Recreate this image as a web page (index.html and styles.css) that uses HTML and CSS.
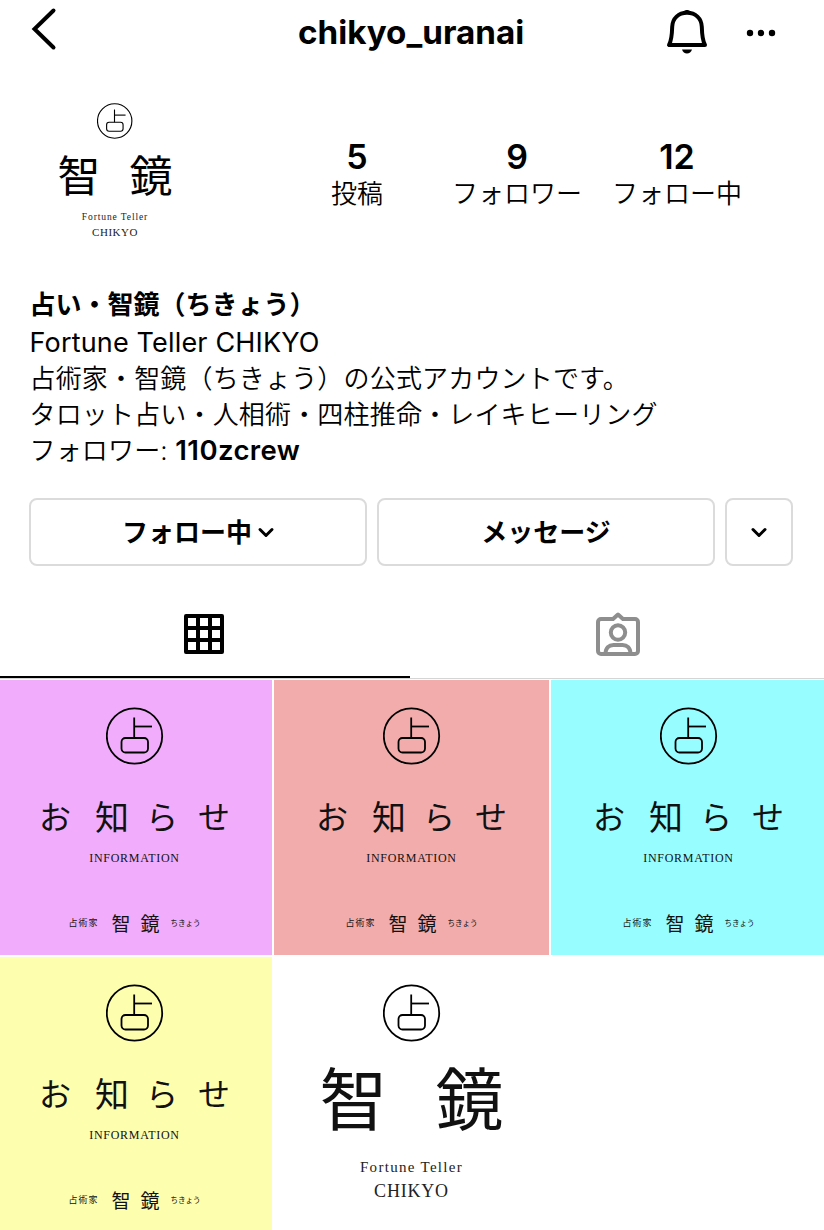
FILE: index.html
```html
<!doctype html>
<html lang="ja">
	<head>
		<meta charset="utf-8">
		<title>chikyo_uranai</title>
		<link rel="stylesheet" href="styles.css">
	</head>
<body>
	<!--共通ロゴ-->
	<svg class="defs" width="0" height="0">
		<symbol id="emblem" viewBox="0 0 58 58">
			<circle cx="28.500" cy="29" r="27.700"/>
			<line x1="28.200" y1="10.500" x2="28.200" y2="31"/>
			<line x1="28.200" y1="19.500" x2="46" y2="19.500"/>
			<rect x="15.500" y="31" width="26.500" height="14.500" rx="4"/>
		</symbol>
	</svg>

	<div class="wrap">
		<div class="header">
			<svg class="back" width="28" height="44" viewBox="0 0 28 44"><path d="M23.500 3.500L4.500 22l19 18.500"/></svg>
			<h1>chikyo_uranai</h1>
			<svg class="bell" width="42" height="46" viewBox="0 0 42 46">
				<path class="line" d="M21 4.800c-8.500 0-14.500 5.500-14.800 14-.2 8-.5 13.500-3.200 18.200h36c-2.700-4.700-3-10.200-3.200-18.200-.3-8.500-6.300-14-14.800-14z"/>
				<path d="M14.500 6C17 4.500 18 2 21 2s4 2.500 6.500 4zM16 41.500h10c-.8 2.600-2.700 4-5 4s-4.200-1.400-5-4z"/>
			</svg>
			<svg class="more" width="30" height="8" viewBox="0 0 30 8"><circle cx="4" cy="4" r="3.200"/><circle cx="15" cy="4" r="3.200"/><circle cx="26" cy="4" r="3.200"/></svg>
		</div>

		<div class="profile">
			<div class="avatar">
				<svg class="emblem"><use href="#emblem"/></svg>
				<div class="name"><span>智</span><span>鏡</span></div>
				<p class="en">Fortune Teller</p>
				<p class="en2">CHIKYO</p>
			</div>
			<ul class="stats">
				<li><b>5</b><span>投稿</span></li>
				<li><b>9</b><span>フォロワー</span></li>
				<li><b>12</b><span>フォロー中</span></li>
			</ul>
		</div>

		<div class="bio">
			<p class="title">占い・智鏡（ちきょう）</p>
			<p class="latin">Fortune Teller CHIKYO</p>
			<p>占術家・智鏡（ちきょう）の公式アカウントです。</p>
			<p>タロット占い・人相術・四柱推命・レイキヒーリング</p>
			<p>フォロワー: <b>110zcrew</b></p>
		</div>

		<div class="btns">
			<a class="btn">フォロー中<svg class="arrow" width="18" height="12" viewBox="0 0 18 12"><path d="M3 2.500l6 6 6-6"/></svg></a>
			<a class="btn">メッセージ</a>
			<a class="btn small"><svg class="arrow" width="18" height="12" viewBox="0 0 18 12"><path d="M3 2.500l6 6 6-6"/></svg></a>
		</div>

		<div class="tabs">
			<a class="tab active">
				<svg width="40" height="40" viewBox="0 0 40 40"><path d="M2 2h36v36H2zM14 2v36M26 2v36M2 14h36M2 26h36"/></svg>
			</a>
			<a class="tab">
				<svg width="44" height="46" viewBox="0 0 44 46"><path d="M5 7h12L22 2.500 27 7h12a3 3 0 0 1 3 3v29a3 3 0 0 1-3 3H5a3 3 0 0 1-3-3V10a3 3 0 0 1 3-3zM9.500 42c0-6 3.500-9 8-9h9c4.500 0 8 3 8 9"/><circle cx="22" cy="20.500" r="7.200"/></svg>
			</a>
		</div>

		<div class="posts">
			<div class="post purple">
				<svg class="emblem"><use href="#emblem"/></svg>
				<div class="news"><span>お</span><span class="kanji">知</span><span>ら</span><span>せ</span></div>
				<p class="info">INFORMATION</p>
				<div class="sign"><span>占術家</span><b>智</b><b>鏡</b><i>ちきょう</i></div>
			</div>
			<div class="post pink">
				<svg class="emblem"><use href="#emblem"/></svg>
				<div class="news"><span>お</span><span class="kanji">知</span><span>ら</span><span>せ</span></div>
				<p class="info">INFORMATION</p>
				<div class="sign"><span>占術家</span><b>智</b><b>鏡</b><i>ちきょう</i></div>
			</div>
			<div class="post cyan">
				<svg class="emblem"><use href="#emblem"/></svg>
				<div class="news"><span>お</span><span class="kanji">知</span><span>ら</span><span>せ</span></div>
				<p class="info">INFORMATION</p>
				<div class="sign"><span>占術家</span><b>智</b><b>鏡</b><i>ちきょう</i></div>
			</div>
			<div class="post yellow">
				<svg class="emblem"><use href="#emblem"/></svg>
				<div class="news"><span>お</span><span class="kanji">知</span><span>ら</span><span>せ</span></div>
				<p class="info">INFORMATION</p>
				<div class="sign"><span>占術家</span><b>智</b><b>鏡</b><i>ちきょう</i></div>
			</div>
			<div class="post white">
				<svg class="emblem"><use href="#emblem"/></svg>
				<div class="name"><span>智</span><span>鏡</span></div>
				<p class="en">Fortune Teller</p>
				<p class="en2">CHIKYO</p>
			</div>
		</div>
	</div>
</body>
</html>
```
FILE: styles.css
```css
*{margin:0;padding:0;box-sizing:border-box;}
ul,li{list-style:none;}
i{font-style:normal;}
body{background:#fff;color:#000;font-family:Inter,"Noto Sans CJK JP",sans-serif;overflow:hidden;}
svg{display:block;flex:none;fill:none;stroke:#000;}
p,span,b,i{white-space:nowrap;}
.defs{position:absolute;}
.wrap{width:824px;height:1230px;overflow:hidden;}

/*ヘッダー*/
.header{height:64px;display:grid;grid-template-columns:298px 226px 142px 80px auto;}
.header h1{font-size:33.200px;line-height:64px;font-weight:700;white-space:nowrap;}
.back{margin:7px 0 0 30px;stroke-width:4;stroke-linecap:round;}
.bell{grid-column:4;margin-top:8px;fill:#000;stroke:none;}
.bell .line{fill:none;stroke:#000;stroke-width:4;stroke-linejoin:round;}
.more{margin-top:29px;fill:#000;stroke:none;}

/*プロフィール*/
.profile{height:221px;display:flex;padding-left:30px;}
.avatar{width:170px;margin-right:77px;padding-top:39px;text-align:center;}
.avatar .emblem{width:36px;height:36px;margin:0 auto;}
.name{display:flex;justify-content:center;font-family:"Noto Sans CJK JP",sans-serif;}
.avatar .name{font-size:43px;line-height:50px;gap:29px;margin-top:9px;}
.en,.en2{font-family:"Liberation Serif",serif;color:#222;}
.avatar .en{font-size:9.500px;line-height:14px;letter-spacing:.9px;margin-top:12px;}
.avatar .en2{font-size:11px;line-height:14px;letter-spacing:.5px;margin-top:1px;}
.stats{display:flex;padding-top:73px;}
.stats li{width:160px;text-align:center;}
.stats b{display:block;font-size:34px;line-height:40px;font-weight:600;}
.stats span{display:block;font-size:26px;line-height:34px;font-weight:350;}

.bio{height:213px;padding:1px 0 0 29.500px;font-size:26px;font-weight:350;letter-spacing:.17px;}
.bio p{height:36px;line-height:36px;}
.bio .title{height:39px;line-height:38px;font-weight:700;letter-spacing:0;}
.bio .latin{font-size:27px;font-weight:400;}
.bio b{font-size:27.500px;line-height:34px;font-weight:600;letter-spacing:.4px;}

.btns{display:flex;gap:10px;padding-left:29px;height:68px;}
.btn{width:338px;height:68px;border:2px solid #dbdbdb;border-radius:8px;padding-bottom:4px;display:flex;align-items:center;justify-content:center;font-size:26px;font-weight:700;}
.btn.small{width:68px;}
.arrow{stroke-width:3;stroke-linecap:round;stroke-linejoin:round;}
.btn .arrow{margin:6px -1px 0 5px;}
.btn.small .arrow{margin:6px 0 0;}

/*タブ*/
.tabs{display:flex;height:113px;border-bottom:1px solid #d5d5d5;}
.tab{width:414px;height:112px;padding:46px 0 0 2px;display:flex;justify-content:center;align-items:flex-start;}
.tab svg{stroke:#8e8e8e;stroke-width:4;stroke-linejoin:round;}
.tab.active{width:410px;padding:48px 2px 0 0;border-bottom:2px solid #000;}
.tab.active svg{stroke:#000;}

/*投稿*/
.posts{margin-top:1px;display:grid;grid-template-columns:272px 275px 273px;grid-auto-rows:275px;gap:2px;}
.post{overflow:hidden;padding-top:27px;display:flex;flex-direction:column;align-items:center;font-family:"Noto Sans CJK JP",sans-serif;color:#111;}
.post .emblem{width:58px;height:58px;}
.emblem{stroke-width:1.800;}
.purple{background:#f1adfb;}
.pink{background:#f3acac;}
.cyan{background:#98fdff;padding-left:2px;}
.yellow{background:#fefeaf;}
.purple,.yellow{padding-right:3px;}
.news{display:flex;align-items:center;margin-top:25px;height:50px;font-size:32px;gap:20px;}
.news .kanji{font-size:34px;margin:0 -3px 0 4px;}
.info{font-family:"Liberation Serif",serif;font-size:12px;line-height:16px;letter-spacing:.7px;margin-top:10px;}
.sign{display:flex;align-items:center;height:24px;margin-top:44px;}
.sign span{font-size:9px;letter-spacing:1px;margin-right:13px;}
.sign b{font-size:19px;font-weight:400;margin-right:10px;}
.sign i{font-size:7.500px;margin-left:1px;}
.white .name{font-size:68px;line-height:80px;gap:48px;margin-top:14px;}
.white .en{font-size:15px;line-height:20px;letter-spacing:1.300px;margin-top:21px;}
.white .en2{font-size:18px;line-height:24px;letter-spacing:.8px;margin-top:2px;}
```
